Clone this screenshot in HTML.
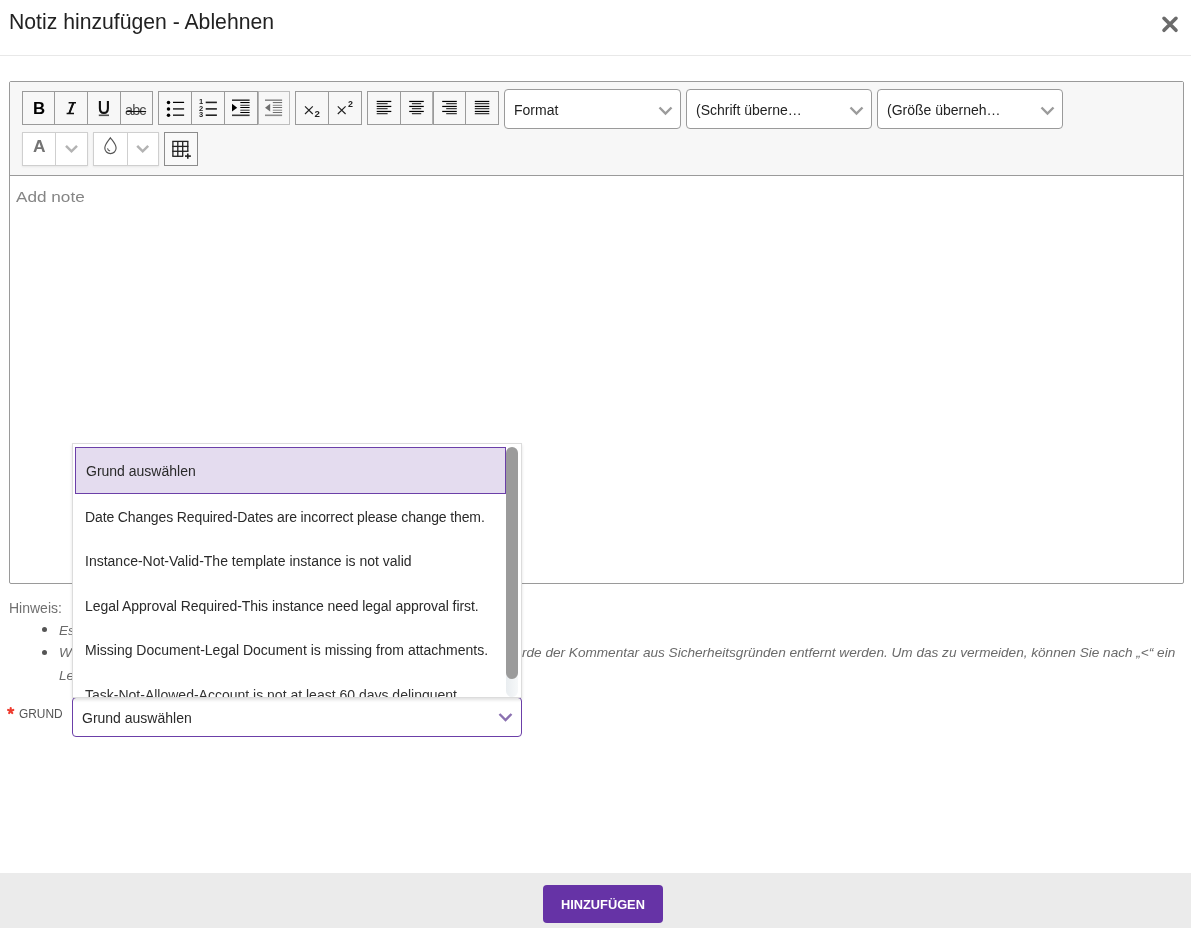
<!DOCTYPE html>
<html><head><meta charset="utf-8">
<style>
html,body{margin:0;padding:0;width:1191px;height:928px;overflow:hidden;background:#fff;}
body{position:relative;font-family:"Liberation Sans",sans-serif;}
.a{position:absolute;box-sizing:border-box;}
.t{position:absolute;white-space:nowrap;line-height:1;will-change:transform;}
svg{position:absolute;overflow:visible;}
</style></head><body>
<div class="t" style="left:8.8px;top:10.95px;font-size:21.2px;color:#222;font-weight:400;font-style:normal;">Notiz hinzufügen - Ablehnen</div>
<svg style="left:0;top:0" width="1191" height="60"><path d="M1164 18.3 L1176 30.3 M1176 18.3 L1164 30.3" stroke="#6b6b6b" stroke-width="3.6" stroke-linecap="round"/></svg>
<div class="a" style="left:0px;top:55px;width:1191px;height:1px;background:#e8e8e8"></div>
<div class="a" style="left:9px;top:81px;width:1175px;height:503px;border:1px solid #9a9a9a;border-radius:2px;background:#fff"></div>
<div class="a" style="left:10px;top:82px;width:1173px;height:94px;background:#f7f7f7;border-bottom:1px solid #9a9a9a"></div>
<div class="a" style="left:22px;top:91px;width:131px;height:34px;border:1px solid #9a9a9a;background:#f7f7f7"></div>
<div class="a" style="left:54px;top:91px;width:1px;height:34px;background:#9a9a9a"></div>
<div class="a" style="left:87px;top:91px;width:1px;height:34px;background:#9a9a9a"></div>
<div class="a" style="left:120px;top:91px;width:1px;height:34px;background:#9a9a9a"></div>
<div class="a" style="left:158px;top:91px;width:132px;height:34px;border:1px solid #9a9a9a;background:#f7f7f7"></div>
<div class="a" style="left:191px;top:91px;width:1px;height:34px;background:#9a9a9a"></div>
<div class="a" style="left:224px;top:91px;width:1px;height:34px;background:#9a9a9a"></div>
<div class="a" style="left:257px;top:91px;width:1px;height:34px;background:#9a9a9a"></div>
<div class="a" style="left:258px;top:91px;width:1px;height:34px;background:#b5b5b5"></div>
<div class="a" style="left:259px;top:91px;width:31px;height:1px;background:#bdbdbd"></div>
<div class="a" style="left:258px;top:124px;width:32px;height:1px;background:#bdbdbd"></div>
<div class="a" style="left:289px;top:91px;width:1px;height:34px;background:#bdbdbd"></div>
<div class="a" style="left:295px;top:91px;width:67px;height:34px;border:1px solid #9a9a9a;background:#f7f7f7"></div>
<div class="a" style="left:328px;top:91px;width:1px;height:34px;background:#9a9a9a"></div>
<div class="a" style="left:367px;top:91px;width:132px;height:34px;border:1px solid #9a9a9a;background:#f7f7f7"></div>
<div class="a" style="left:400px;top:91px;width:1px;height:34px;background:#9a9a9a"></div>
<div class="a" style="left:433px;top:91px;width:1px;height:34px;background:#9a9a9a"></div>
<div class="a" style="left:465px;top:91px;width:1px;height:34px;background:#9a9a9a"></div>
<div class="a" style="left:432px;top:91px;width:1px;height:34px;background:#b0b0b0"></div>
<div class="a" style="left:504px;top:89px;width:177px;height:40px;border:1px solid #9a9a9a;border-radius:4px;background:#fff"></div>
<div class="t" style="left:513.9px;top:102.95px;font-size:14px;color:#222;font-weight:400;font-style:normal;">Format</div>
<svg style="left:0;top:0" width="1" height="1"><path d="M659.5 107.5 L665.5 113.5 L671.5 107.5" fill="none" stroke="#9b9b9b" stroke-width="2.4"/></svg>
<div class="a" style="left:686px;top:89px;width:186px;height:40px;border:1px solid #9a9a9a;border-radius:4px;background:#fff"></div>
<div class="t" style="left:695.9px;top:102.95px;font-size:14px;color:#222;font-weight:400;font-style:normal;">(Schrift überne…</div>
<svg style="left:0;top:0" width="1" height="1"><path d="M850.5 107.5 L856.5 113.5 L862.5 107.5" fill="none" stroke="#9b9b9b" stroke-width="2.4"/></svg>
<div class="a" style="left:877px;top:89px;width:186px;height:40px;border:1px solid #9a9a9a;border-radius:4px;background:#fff"></div>
<div class="t" style="left:886.9px;top:102.95px;font-size:14px;color:#222;font-weight:400;font-style:normal;">(Größe überneh…</div>
<svg style="left:0;top:0" width="1" height="1"><path d="M1041.5 107.5 L1047.5 113.5 L1053.5 107.5" fill="none" stroke="#9b9b9b" stroke-width="2.4"/></svg>
<div class="a" style="left:22px;top:132px;width:66px;height:34px;box-shadow:0 1px 2px rgba(0,0,0,0.07)"></div>
<div class="a" style="left:22px;top:132px;width:66px;height:34px;border:1px solid #cfcfcf;background:#fff"></div>
<div class="a" style="left:55px;top:133px;width:1px;height:32px;background:#cfcfcf"></div>
<div class="a" style="left:93px;top:132px;width:66px;height:34px;box-shadow:0 1px 2px rgba(0,0,0,0.07)"></div>
<div class="a" style="left:93px;top:132px;width:66px;height:34px;border:1px solid #cfcfcf;background:#fff"></div>
<div class="a" style="left:127px;top:133px;width:1px;height:32px;background:#cfcfcf"></div>
<div class="a" style="left:164px;top:132px;width:34px;height:34px;border:1px solid #8c8c8c;background:#f9f9f9"></div>
<div class="t" style="left:32.6px;top:100.98px;font-size:16.8px;color:#000;font-weight:700;font-style:normal;">B</div>
<div class="t" style="left:125.4px;top:102.51px;font-size:14.4px;color:#4a4a4a;font-weight:400;font-style:normal;letter-spacing:-0.85px">abc</div>
<div class="t" style="left:33.0px;top:137.67px;font-size:17.4px;color:#747474;font-weight:700;font-style:normal;">A</div>
<svg style="left:0;top:0" width="1191" height="200"><path d="M68.6 102.7 H76 M66.6 113.5 H74 M73.4 102.7 L69.2 113.5" stroke="#111" stroke-width="1.5" fill="none"/><path d="M73.4 102.7 L69.2 113.5" stroke="#111" stroke-width="2" fill="none"/><path d="M99.9 101 V108.2 Q99.9 112.9 103.9 112.9 Q107.9 112.9 107.9 108.2 V101" stroke="#111" stroke-width="2.1" fill="none"/><rect x="98.8" y="114.5" width="10.2" height="1.6" fill="#505050"/><line x1="126.3" y1="111.5" x2="146.1" y2="111.5" stroke="#111" stroke-width="1.1"/><circle cx="168.5" cy="102.4" r="1.75" fill="#000"/><line x1="173" y1="102.4" x2="184.1" y2="102.4" stroke="#000" stroke-width="1.25"/><circle cx="168.5" cy="108.9" r="1.75" fill="#000"/><line x1="173" y1="108.9" x2="184.1" y2="108.9" stroke="#333" stroke-width="1.6"/><circle cx="168.5" cy="115.2" r="1.75" fill="#000"/><line x1="173" y1="115.2" x2="184.1" y2="115.2" stroke="#333" stroke-width="1.6"/><text x="201.1" y="104.35000000000001" font-family="Liberation Sans" font-size="7.5" font-weight="700" text-anchor="middle" fill="#222">1</text><line x1="205.7" y1="102.4" x2="216.9" y2="102.4" stroke="#222" stroke-width="1.6"/><text x="201.1" y="110.85000000000001" font-family="Liberation Sans" font-size="7.5" font-weight="700" text-anchor="middle" fill="#222">2</text><line x1="205.7" y1="108.9" x2="216.9" y2="108.9" stroke="#222" stroke-width="1.6"/><text x="201.1" y="117.15" font-family="Liberation Sans" font-size="7.5" font-weight="700" text-anchor="middle" fill="#222">3</text><line x1="205.7" y1="115.2" x2="216.9" y2="115.2" stroke="#222" stroke-width="1.6"/><line x1="232" y1="100.2" x2="249.6" y2="100.2" stroke="#3a3a3a" stroke-width="1.6"/><line x1="232" y1="115.3" x2="249.6" y2="115.3" stroke="#3a3a3a" stroke-width="1.6"/><line x1="240.29999999999998" y1="102.55" x2="249.6" y2="102.55" stroke="#000" stroke-width="1.05"/><line x1="240.29999999999998" y1="105.3" x2="249.6" y2="105.3" stroke="#3a3a3a" stroke-width="1.05"/><line x1="240.29999999999998" y1="107.5" x2="249.6" y2="107.5" stroke="#000" stroke-width="1.05"/><line x1="240.29999999999998" y1="110.2" x2="249.6" y2="110.2" stroke="#3a3a3a" stroke-width="1.05"/><line x1="240.29999999999998" y1="112.5" x2="249.6" y2="112.5" stroke="#000" stroke-width="1.05"/><path d="M232 103.8 L237.2 107.7 L232 111.6 Z" fill="#000"/><line x1="265" y1="100.2" x2="282.1" y2="100.2" stroke="#8c8c8c" stroke-width="1.6"/><line x1="265" y1="115.3" x2="282.1" y2="115.3" stroke="#8c8c8c" stroke-width="1.6"/><line x1="272.8" y1="102.55" x2="282.1" y2="102.55" stroke="#6f6f6f" stroke-width="1.05"/><line x1="272.8" y1="105.3" x2="282.1" y2="105.3" stroke="#8c8c8c" stroke-width="1.05"/><line x1="272.8" y1="107.5" x2="282.1" y2="107.5" stroke="#6f6f6f" stroke-width="1.05"/><line x1="272.8" y1="110.2" x2="282.1" y2="110.2" stroke="#8c8c8c" stroke-width="1.05"/><line x1="272.8" y1="112.5" x2="282.1" y2="112.5" stroke="#6f6f6f" stroke-width="1.05"/><path d="M270.2 103.8 L265 107.7 L270.2 111.6 Z" fill="#6f6f6f"/><path d="M305 106.4 L312.8 114 M312.8 106.4 L305 114" stroke="#222" stroke-width="1.15" fill="none"/><text x="314.6" y="117.0" font-family="Liberation Sans" font-size="9.7" font-weight="700" fill="#222">2</text><path d="M337.8 106.4 L345.6 114 M345.6 106.4 L337.8 114" stroke="#222" stroke-width="1.15" fill="none"/><text x="347.9" y="107.3" font-family="Liberation Sans" font-size="8.9" font-weight="700" fill="#222">2</text><line x1="376.7" y1="101.45" x2="391.3" y2="101.45" stroke="#000" stroke-width="1.2"/><line x1="409.2" y1="101.45" x2="423.8" y2="101.45" stroke="#000" stroke-width="1.2"/><line x1="442.2" y1="101.45" x2="456.8" y2="101.45" stroke="#000" stroke-width="1.2"/><line x1="474.8" y1="101.45" x2="489.3" y2="101.45" stroke="#000" stroke-width="1.2"/><line x1="376.7" y1="103.65" x2="387.6" y2="103.65" stroke="#333" stroke-width="1.2"/><line x1="411.9" y1="103.65" x2="421.2" y2="103.65" stroke="#333" stroke-width="1.2"/><line x1="446.2" y1="103.65" x2="456.8" y2="103.65" stroke="#333" stroke-width="1.2"/><line x1="474.8" y1="103.65" x2="489.3" y2="103.65" stroke="#333" stroke-width="1.2"/><line x1="376.7" y1="106.45" x2="391.3" y2="106.45" stroke="#000" stroke-width="1.2"/><line x1="409.2" y1="106.45" x2="423.8" y2="106.45" stroke="#000" stroke-width="1.2"/><line x1="442.2" y1="106.45" x2="456.8" y2="106.45" stroke="#000" stroke-width="1.2"/><line x1="474.8" y1="106.45" x2="489.3" y2="106.45" stroke="#000" stroke-width="1.2"/><line x1="376.7" y1="108.65" x2="387.6" y2="108.65" stroke="#333" stroke-width="1.2"/><line x1="411.9" y1="108.65" x2="421.2" y2="108.65" stroke="#333" stroke-width="1.2"/><line x1="446.2" y1="108.65" x2="456.8" y2="108.65" stroke="#333" stroke-width="1.2"/><line x1="474.8" y1="108.65" x2="489.3" y2="108.65" stroke="#333" stroke-width="1.2"/><line x1="376.7" y1="111.45" x2="391.3" y2="111.45" stroke="#000" stroke-width="1.2"/><line x1="409.2" y1="111.45" x2="423.8" y2="111.45" stroke="#000" stroke-width="1.2"/><line x1="442.2" y1="111.45" x2="456.8" y2="111.45" stroke="#000" stroke-width="1.2"/><line x1="474.8" y1="111.45" x2="489.3" y2="111.45" stroke="#000" stroke-width="1.2"/><line x1="376.7" y1="113.65" x2="387.6" y2="113.65" stroke="#333" stroke-width="1.2"/><line x1="411.9" y1="113.65" x2="421.2" y2="113.65" stroke="#333" stroke-width="1.2"/><line x1="446.2" y1="113.65" x2="456.8" y2="113.65" stroke="#333" stroke-width="1.2"/><line x1="474.8" y1="113.65" x2="489.3" y2="113.65" stroke="#333" stroke-width="1.2"/><path d="M66 145.8 L71.5 151.3 L77 145.8" stroke="#b3b3b3" stroke-width="2.5" fill="none"/><path d="M137.2 145.8 L142.7 151.3 L148.2 145.8" stroke="#b3b3b3" stroke-width="2.5" fill="none"/><path d="M110.4 137.8 C108.6 140.3 104.8 144.3 104.8 148 A5.65 5.65 0 0 0 116.1 148 C116.1 144.3 112.2 140.3 110.4 137.8 Z" stroke="#555" stroke-width="1.15" fill="none"/><path d="M107.5 148.3 Q107.9 150.4 110.1 150.9" stroke="#555" stroke-width="1.05" fill="none"/><line x1="172.9" y1="141.4" x2="172.9" y2="156.3" stroke="#222" stroke-width="1.3"/><line x1="177.8" y1="141.4" x2="177.8" y2="156.3" stroke="#222" stroke-width="1.3"/><line x1="182.7" y1="141.4" x2="182.7" y2="156.3" stroke="#222" stroke-width="1.3"/><line x1="187.8" y1="141.4" x2="187.8" y2="151.6" stroke="#222" stroke-width="1.3"/><line x1="172.3" y1="141.4" x2="188.4" y2="141.4" stroke="#222" stroke-width="1.3"/><line x1="172.3" y1="146.4" x2="188.4" y2="146.4" stroke="#222" stroke-width="1.3"/><line x1="172.3" y1="151.3" x2="188.4" y2="151.3" stroke="#222" stroke-width="1.3"/><line x1="172.3" y1="156.3" x2="183.2" y2="156.3" stroke="#222" stroke-width="1.3"/><line x1="185" y1="156.1" x2="190.9" y2="156.1" stroke="#222" stroke-width="1.6"/><line x1="187.8" y1="153.4" x2="187.8" y2="158.7" stroke="#222" stroke-width="1.6"/></svg>
<div class="t" style="left:15.9px;top:189.03px;font-size:15.2px;color:#858585;font-weight:400;font-style:normal;transform:scaleX(1.13);transform-origin:0 0">Add note</div>
<div class="t" style="left:9px;top:601.35px;font-size:14px;color:#707070;font-weight:400;font-style:normal;">Hinweis:</div>
<div class="a" style="left:42px;top:627px;width:5px;height:5px;border-radius:50%;background:#555"></div>
<div class="a" style="left:42px;top:650px;width:5px;height:5px;border-radius:50%;background:#555"></div>
<div class="t" style="left:58.6px;top:623.68px;font-size:13.6px;color:#6a6a6a;font-weight:400;font-style:italic;">Es gibt eine Einschränkung</div>
<div class="t" style="left:58.6px;top:646.38px;font-size:13.6px;color:#6a6a6a;font-weight:400;font-style:italic;">Wenn Sie „&lt;“ gefolgt von einem Buchstaben eingeben, wü</div>
<div class="t" style="left:521.6px;top:646.38px;font-size:13.6px;color:#6a6a6a;font-weight:400;font-style:italic;">rde der Kommentar aus Sicherheitsgründen entfernt werden. Um das zu vermeiden, können Sie nach „&lt;“ ein</div>
<div class="t" style="left:58.6px;top:668.78px;font-size:13.6px;color:#6a6a6a;font-weight:400;font-style:italic;">Leerzeichen einfügen.</div>
<svg style="left:0;top:0" width="1" height="1"><g stroke="#ee3b2e" stroke-width="2.1" stroke-linecap="round"><line x1="10.7" y1="710.8" x2="10.70" y2="708.05"/><line x1="10.7" y1="710.8" x2="13.32" y2="709.95"/><line x1="10.7" y1="710.8" x2="12.32" y2="713.02"/><line x1="10.7" y1="710.8" x2="9.08" y2="713.02"/><line x1="10.7" y1="710.8" x2="8.08" y2="709.95"/></g></svg>
<div class="t" style="left:18.8px;top:708.92px;font-size:11.9px;color:#555;font-weight:400;font-style:normal;">GRUND</div>
<div class="a" style="left:72px;top:697px;width:450px;height:40px;border:1px solid #6b3fa8;border-radius:4px;background:#fff"></div>
<div class="t" style="left:81.5px;top:710.95px;font-size:14px;color:#2a2a2a;font-weight:400;font-style:normal;">Grund auswählen</div>
<svg style="left:0;top:0" width="1" height="1"><path d="M499.5 714 L505.5 720 L511.5 714" fill="none" stroke="#8a70b0" stroke-width="2.4"/></svg>
<div class="a" style="left:72px;top:443px;width:450px;height:255px;border:1px solid #dcdcdc;background:#fff;box-shadow:0 2px 3px rgba(0,0,0,0.12);overflow:hidden"></div>
<div class="a" style="left:75px;top:447px;width:431px;height:47px;border:1px solid #6b3fa8;background:#e4dcef"></div>
<div class="t" style="left:85.6px;top:464.05px;font-size:14px;color:#2a2a2a;font-weight:400;font-style:normal;">Grund auswählen</div>
<div class="t" style="left:85.0px;top:510.35px;font-size:14px;color:#2a2a2a;font-weight:400;font-style:normal;letter-spacing:-0.12px">Date Changes Required-Dates are incorrect please change them.</div>
<div class="t" style="left:85.0px;top:554.45px;font-size:14px;color:#2a2a2a;font-weight:400;font-style:normal;letter-spacing:0px">Instance-Not-Valid-The template instance is not valid</div>
<div class="t" style="left:85.0px;top:599.05px;font-size:14px;color:#2a2a2a;font-weight:400;font-style:normal;letter-spacing:-0.05px">Legal Approval Required-This instance need legal approval first.</div>
<div class="t" style="left:85.0px;top:643.45px;font-size:14px;color:#2a2a2a;font-weight:400;font-style:normal;letter-spacing:0px">Missing Document-Legal Document is missing from attachments.</div>
<div class="a" style="left:73px;top:680px;width:433px;height:17px;overflow:hidden"><div class="t" style="left:12px;top:7.85px;font-size:14px;color:#333;font-weight:400;font-style:normal;">Task-Not-Allowed-Account is not at least 60 days delinquent</div>
</div>
<div class="a" style="left:506px;top:447px;width:12px;height:250px;background:linear-gradient(to right,#e9edf0,#f6f8f9);border-radius:6px"></div>
<div class="a" style="left:506px;top:447px;width:12px;height:232px;background:#9b9b9b;border-radius:6px"></div>
<div class="a" style="left:0px;top:873px;width:1191px;height:55px;background:#ebebeb"></div>
<div class="a" style="left:543px;top:885px;width:120px;height:38px;background:#6633a6;border-radius:4px"></div>
<div class="t" style="left:561px;top:898.56px;font-size:12.8px;color:#fff;font-weight:700;font-style:normal;">HINZUFÜGEN</div>
</body></html>
